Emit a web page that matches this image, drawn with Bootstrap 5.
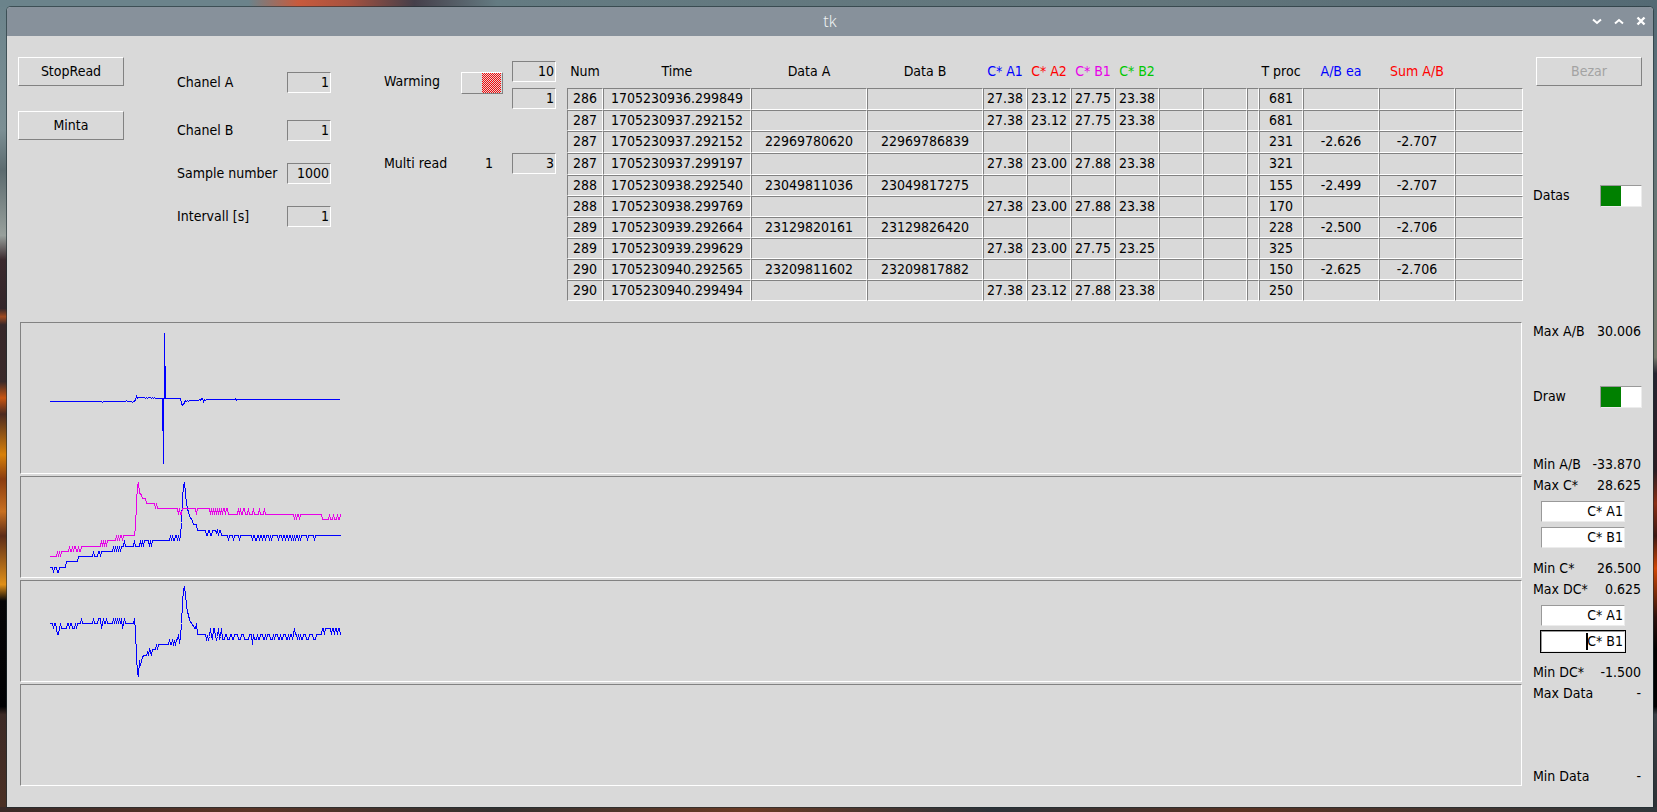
<!DOCTYPE html>
<html lang="en">
<head>
<meta charset="utf-8">
<meta name="viewport" content="width=device-width, initial-scale=1">
<title>tk</title>
<link href="https://cdn.jsdelivr.net/npm/bootstrap@5.3.0/dist/css/bootstrap.min.css" rel="stylesheet">
<style>
  :root { --face: #d9d9d9; --dark: #828282; --lite: #ffffff; }
  body {
    min-height: 100vh;
    padding: 7px 4px 5px 7px;
    font: 14px/20px "DejaVu Sans Condensed", "DejaVu Sans", sans-serif;
    color: #000;
    background:
      linear-gradient(90deg, #6b838b, #6b838b 15%, #c85a3c 18%, #a8523f 21%, #453f4a 25%, #647b82 30%, #62757b 70%, #546a74) top / 100% 7px no-repeat,
      linear-gradient(90deg, #3a2a28, #5a3426 15%, #33302f 30%, #6a3a24 45%, #2c3238 60%, #593222 75%, #30363a) bottom / 100% 5px no-repeat,
      linear-gradient(#546a74 0 7px, #5c717a 12%, #6c7873 30%, #77796c 44%, #262430 46%, #2a1c22 58%, #8a2e14 62%, #3c1712 66%, #d04604 70%, #2c100c 76%, #000 80%, #000 87%, #3a4046 88%, #2c3034) right / 50% 100% no-repeat,
      linear-gradient(#6b838b, #7c8f94 16%, #5c6b6f 21%, #98a09c 29%, #3b2a2e 32%, #33262a 38%, #a04a20 39%, #37282a 40%, #3a2a2a 47%, #c85410 49%, #4c2a20 51%, #d88008 56%, #8a3c10 59%, #c87020 63%, #5c2c18 66%, #e09018 72%, #050507 74%, #010103 87%, #3c2a26 88%, #4c3024) left / 50% 100% no-repeat;
  }
  .tk-window { background: var(--face); border-radius: 4px 4px 0 0; box-shadow: 0 0 0 1px rgba(30, 45, 50, .6); padding-bottom: 21px; min-height: calc(100vh - 12px); }
  .tk-title { height: 29px; background: #87919b; border-radius: 4px 4px 0 0; color: #eef1f3; }
  .tk-title h1 { font: 300 16px/28px "Noto Sans", sans-serif; margin: 0; }
  .tk-title .win-buttons { position: absolute; right: 7px; top: 9px; gap: 12px; }
  .tk-title button { width: 10px; height: 10px; padding: 0; border: 0; background: none; line-height: 0; color: #fff; }
  .controls { min-width: 0; padding-left: 11px; }
  .side { flex: 0 0 109px; margin: 0 11px; }
  .side-top { padding-top: 21px; }
  .side-top .switch-row { margin-top: 99px; }
  .side .cap { line-height: 18px; }
  .side .val { padding-right: 1px; }
  .side label { padding-bottom: 2px; }
  .bezel, .bezel:hover, .bezel:disabled {
    width: 106px; height: 29px; padding: 0 0 2px; border: 1px solid; border-radius: 0; opacity: 1;
    border-color: var(--lite) var(--dark) var(--dark) var(--lite);
    background: var(--face); color: #000; font-size: 14px; line-height: 20px;
  }
  .bezel:disabled { color: #a3a3a3; }
  .entry {
    width: 44px; height: 21px; padding: 0 1px 2px; border: 1px solid; border-radius: 0; outline: 0; text-align: right;
    border-color: var(--dark) var(--lite) var(--lite) var(--dark); background: var(--face); color: #000;
  }
  .entry-white { width: 84px; background: #fff; border-color: #999 #ececec #ececec #999; display: block; }
  .entry-active { box-shadow: 0 0 0 1px #000; }
  .text-cursor { position: absolute; left: 45px; top: 2px; width: 2px; height: 17px; background: #000; }
  .pane-buttons { padding-top: 21px; gap: 25px; }
  .pane-params { margin-left: 53px; padding-top: 36px; gap: 22px; }
  .pane-params label { width: 110px; padding-bottom: 2px; line-height: 18px; }
  .pane-params .first { margin-bottom: 5px; }
  .pane-warming { margin-left: 53px; padding-top: 25px; gap: 44px; }
  .pane-warming .name { width: 77px; padding-bottom: 2px; line-height: 18px; }
  .pane-warming .upper { padding-top: 11px; }
  .pane-warming .mid { width: 42px; margin-right: 9px; }
  .pane-warming .count { padding: 0 0 2px 14px; text-align: center; line-height: 18px; }
  .pane-warming .stack { gap: 6px; }
  .toggle { appearance: none; display: block; width: 42px; height: 22px; margin: 0; border: 1px solid; }
  .toggle-raised {
    border-color: var(--lite) var(--dark) var(--dark) var(--lite);
    background:
      linear-gradient(90deg, var(--face) 20px, transparent 20px 39px, var(--face) 39px),
      url("data:image/svg+xml,%3Csvg xmlns='http://www.w3.org/2000/svg' width='2' height='2'%3E%3Cpath fill='%23d9d9d9' d='M0 0h2v2H0z'/%3E%3Cpath fill='red' d='M0 0h1v1H0zM1 1h1v1H1z'/%3E%3C/svg%3E") 0 0 / 2px 2px;
  }
  .toggle-on { border-color: #999 #ececec #ececec #999; background: linear-gradient(90deg, green 20px, #fff 20px); }
  .readings { margin: 20px 0 21px 11px; min-width: 0; }
  .readings table { width: 100%; table-layout: fixed; border-collapse: separate; border-spacing: 0; }
  .readings th { height: 32px; padding: 0 0 3px; font-weight: 400; text-align: center; line-height: 20px; white-space: nowrap; }
  .readings td {
    height: 21px; padding: 0 0 2px; border: 1px solid; text-align: center; line-height: 16px; white-space: nowrap;
    border-color: var(--dark) var(--lite) var(--lite) var(--dark);
  }
  .readings .tall td { height: 22px; }
  .c-blue { color: #00f; } .c-red { color: #f00; } .c-mag { color: #e800e8; } .c-green { color: #00c800; }
  .charts { gap: 2px; padding-left: 13px; }
  .plot { min-width: 0; height: 102px; border: 1px solid; border-color: var(--dark) var(--lite) var(--lite) var(--dark); padding-left: 29px; overflow: hidden; }
  .plot-tall { height: 152px; }
  .plot svg { display: block; shape-rendering: crispEdges; stroke-linecap: square; fill: none; overflow: visible; }
  .pickers { margin: 0 17px 3px 8px; gap: 5px; }
</style>
</head>
<body>
<main class="tk-window">
  <header class="tk-title position-relative text-center">
    <h1>tk</h1>
    <div class="win-buttons d-flex">
      <button type="button" aria-label="Minimize"><svg width="10" height="10" viewBox="0 0 10 10" fill="none" stroke="currentColor" stroke-width="2"><path d="M1 3.500 5 7l4-3.500"/></svg></button>
      <button type="button" aria-label="Maximize"><svg width="10" height="10" viewBox="0 0 10 10" fill="none" stroke="currentColor" stroke-width="2"><path d="M1 7.500 5 4l4 3.500"/></svg></button>
      <button type="button" aria-label="Close"><svg width="10" height="10" viewBox="0 0 10 10" fill="none" stroke="currentColor" stroke-width="2.400"><path d="M1.500 1.500l7 7M8.500 1.500l-7 7"/></svg></button>
    </div>
  </header>

  <section class="d-flex">
    <div class="controls d-flex flex-grow-1">
      <div class="pane-buttons d-flex flex-column">
        <button class="btn bezel" type="button">StopRead</button>
        <button class="btn bezel" type="button">Minta</button>
      </div>
      <div class="pane-params d-flex flex-column">
        <div class="first d-flex align-items-center"><label for="chA">Chanel A</label><input class="entry" id="chA" value="1"></div>
        <div class="d-flex align-items-center"><label for="chB">Chanel B</label><input class="entry" id="chB" value="1"></div>
        <div class="d-flex align-items-center"><label for="samples">Sample number</label><input class="entry" id="samples" value="1000"></div>
        <div class="d-flex align-items-center"><label for="interval">Intervall [s]</label><input class="entry" id="interval" value="1"></div>
      </div>
      <div class="pane-warming d-flex flex-column">
        <div class="d-flex">
          <label class="name upper" for="warming">Warming</label>
          <div class="mid upper"><input class="toggle toggle-raised" type="checkbox" id="warming"></div>
          <div class="stack d-flex flex-column"><input class="entry" aria-label="Warming upper" value="10"><input class="entry" aria-label="Warming lower" value="1"></div>
        </div>
        <div class="d-flex align-items-center">
          <label class="name" for="multi">Multi read</label><span class="mid count">1</span><input class="entry" id="multi" value="3">
        </div>
      </div>
      <div class="readings flex-grow-1">
        <table>
          <colgroup id="cols"></colgroup>
          <thead><tr>
            <th>Num</th><th>Time</th><th>Data A</th><th>Data B</th>
            <th class="c-blue">C* A1</th><th class="c-red">C* A2</th><th class="c-mag">C* B1</th><th class="c-green">C* B2</th>
            <th></th><th></th><th></th><th>T proc</th><th class="c-blue">A/B ea</th><th class="c-red">Sum A/B</th><th></th>
          </tr></thead>
          <tbody id="rows"></tbody>
        </table>
      </div>
    </div>
    <div class="side side-top">
      <div class="d-flex justify-content-end"><button class="btn bezel" type="button" disabled>Bezar</button></div>
      <div class="switch-row d-flex justify-content-between align-items-center"><label for="datas">Datas</label><input class="toggle toggle-on" type="checkbox" id="datas" checked></div>
    </div>
  </section>

  <section class="charts d-flex flex-column">
    <div class="d-flex">
      <div class="plot plot-tall flex-grow-1"><svg width="291" height="150" stroke="#00f"><path transform="translate(.5 .5)" d="M0 78H51L52 79 53 78H75L76 77 77 78H81L82 79 83 78H84L85 76 86 73 87 75 88 74H94L95 75 96 74 97 75 98 74H100L101 75 102 74 103 75 104 74 105 75H112V107H113V140V75H114V9V43H115V75H130L131 80 132 82 133 81 134 79 135 77 136 78 137 77 138 78 139 77H148L149 76 150 77 151 75 152 75 153 78 154 76 155 77 156 76H184L185 75 186 77 187 76H289"/></svg></div>
      <div class="side d-flex flex-column justify-content-between">
        <div class="cap d-flex justify-content-between"><span>Max A/B</span><span class="val">30.006</span></div>
        <div class="d-flex justify-content-between align-items-center"><label for="draw">Draw</label><input class="toggle toggle-on" type="checkbox" id="draw" checked></div>
        <div class="d-flex justify-content-between"><span>Min A/B</span><span class="val">-33.870</span></div>
      </div>
    </div>
    <div class="d-flex">
      <div class="plot flex-grow-1"><svg width="291" height="100" id="temps"></svg></div>
      <div class="side d-flex flex-column justify-content-between">
        <div class="cap d-flex justify-content-between"><span>Max C*</span><span class="val">28.625</span></div>
        <div class="pickers d-flex flex-column">
          <input class="entry entry-white" aria-label="First C* channel" value="C* A1"><input class="entry entry-white" aria-label="Second C* channel" value="C* B1">
        </div>
        <div class="d-flex justify-content-between"><span>Min C*</span><span class="val">26.500</span></div>
      </div>
    </div>
    <div class="d-flex">
      <div class="plot flex-grow-1"><svg width="291" height="100" id="delta"></svg></div>
      <div class="side d-flex flex-column justify-content-between">
        <div class="cap d-flex justify-content-between"><span>Max DC*</span><span class="val">0.625</span></div>
        <div class="pickers d-flex flex-column">
          <input class="entry entry-white" aria-label="First DC* channel" value="C* A1">
          <div class="position-relative"><input class="entry entry-white entry-active" aria-label="Second DC* channel" value="C* B1"><span class="text-cursor"></span></div>
        </div>
        <div class="d-flex justify-content-between"><span>Min DC*</span><span class="val">-1.500</span></div>
      </div>
    </div>
    <div class="d-flex">
      <div class="plot flex-grow-1"></div>
      <div class="side d-flex flex-column justify-content-between">
        <div class="cap d-flex justify-content-between"><span>Max Data</span><span class="val">-</span></div>
        <div class="d-flex justify-content-between"><span>Min Data</span><span class="val">-</span></div>
      </div>
    </div>
  </section>
</main>
<script src="https://cdn.jsdelivr.net/npm/bootstrap@5.3.0/dist/js/bootstrap.bundle.min.js"></script>
<script>
  // Column widths; a fixed table shares out any extra room between them.
  document.getElementById('cols').innerHTML =
    [36, 148, 116, 116, 44, 44, 44, 44, 44, 44, 12, 44, 76, 76, 68].map(w => `<col style="width:${w}px">`).join('');

  // num, time, data A, data B, C* A1, A2, B1, B2, T proc, A/B ea, Sum A/B
  const data = [
    ['286','1705230936.299849','','','27.38','23.12','27.75','23.38','681','',''],
    ['287','1705230937.292152','','','27.38','23.12','27.75','23.38','681','',''],
    ['287','1705230937.292152','22969780620','22969786839','','','','','231','-2.626','-2.707'],
    ['287','1705230937.299197','','','27.38','23.00','27.88','23.38','321','',''],
    ['288','1705230938.292540','23049811036','23049817275','','','','','155','-2.499','-2.707'],
    ['288','1705230938.299769','','','27.38','23.00','27.88','23.38','170','',''],
    ['289','1705230939.292664','23129820161','23129826420','','','','','228','-2.500','-2.706'],
    ['289','1705230939.299629','','','27.38','23.00','27.75','23.25','325','',''],
    ['290','1705230940.292565','23209811602','23209817882','','','','','150','-2.625','-2.706'],
    ['290','1705230940.299494','','','27.38','23.12','27.88','23.38','250','','']
  ];
  document.getElementById('rows').innerHTML = data.map((r, i) => {
    const cells = [...r.slice(0, 8), '', '', '', ...r.slice(8), ''];
    return `<tr${[0, 2, 3].includes(i) ? ' class="tall"' : ''}>${cells.map(c => `<td>${c}</td>`).join('')}</tr>`;
  }).join('');

  // A trace: each level holds from its x onward; spikes override single samples.
  function trace(id, colour, levels, spikes) {
    const y = [];
    let k = 0;
    for (let x = 0; x <= 290; x++) {
      while (k + 1 < levels.length && levels[k + 1][0] <= x) k++;
      y[x] = levels[k][1];
    }
    for (const [level, xs] of spikes) xs.forEach(x => { y[x] = level; });
    const d = y.map((v, x) => (x ? 'L' : 'M') + x + ' ' + v).join('');
    document.getElementById(id).insertAdjacentHTML('beforeend', `<path transform="translate(.5 .5)" stroke="${colour}" d="${d}"/>`);
  }
  trace('temps', '#00f',
    [[0,90],[16,84],[28,79],[53,74],[73,69],[94,63],[126,58],[130,58],[131,45],[132,21],[133,8],[134,5],[135,16],[136,26],[137,31],[138,35],[139,38],[140,41],[142,44],[143,47],[147,53],[166,55],[167,53],[172,58]],
    [[95,[3,7,8]],[84,[27]],[79,[29,50]],[74,[43,48,49,51,52]],[69,[63,65,67,69,71,72]],[63,[74,84,90,92]],[69,[99,101]],[58,[120,122,125]],[63,[127,129]],
     [58,[157,161,168,171]],[58,[156,160]],[63,[178,183,189,202,205,206,209,212,215,219,221,228,232,235,238,241,243,245,248,250,257,264]]]);
  trace('temps', '#e800e8',
    [[0,79],[12,74],[31,69],[57,63],[73,58],[85,50],[86,26],[87,8],[88,5],[89,16],[91,18],[92,21],[96,26],[107,31],[180,37],[272,42]],
    [[74,[7,9,11]],[69,[19,22,24,25,28]],[74,[30]],[63,[51,53,55]],[58,[66,68,70,71]],[31,[105]],[37,[128,130,131,146,160,162,164,166,168,170,172,175,178,179]],
     [31,[188,190,193,194,198,203,209,214]],[42,[244,246,249]],[37,[271,279,283,287,290]]]);
  trace('delta', '#00f',
    [[0,42],[5,47],[27,42],[85,50],[86,74],[87,92],[88,95],[89,79],[90,84],[91,79],[92,76],[93,74],[97,71],[98,68],[106,63],[124,60],[126,58],[129,62],[130,55],[131,42],[132,21],[133,8],[134,5],[135,13],[136,24],[137,30],[138,34],[139,38],[140,41],[142,44],[144,47],[147,53],[156,58],[157,55],[171,58],[175,53],[177,58],[180,53],[182,58],[184,53],[188,58],[191,53],[194,58],[199,53],[202,58],[210,53],[213,58],[217,53],[220,58],[225,53],[228,58],[233,53],[236,58],[240,53],[251,58],[253,53],[256,58],[259,53],[263,58],[266,53],[272,47]],
    [[42,[5,10,17,18,20]],[47,[3,22,24,51,72]],[53,[7,8]],[42,[25,21]],[37,[31,43,48,49,50,53,56,63,65,67,69,71,74,84]],[74,[98,101]],[70,[100]],[68,[105,107]],
     [58,[119,122,126]],[63,[121,125]],[53,[128]],[42,[146]],[47,[160,163,164,168,171]],[58,[158,162,166,169]],[63,[202]],[58,[205,242,244,247,249]],[53,[203,207,215,223,230,238]],[47,[244]],[53,[274,281,284,287,290]]]);
</script>
</body>
</html>
